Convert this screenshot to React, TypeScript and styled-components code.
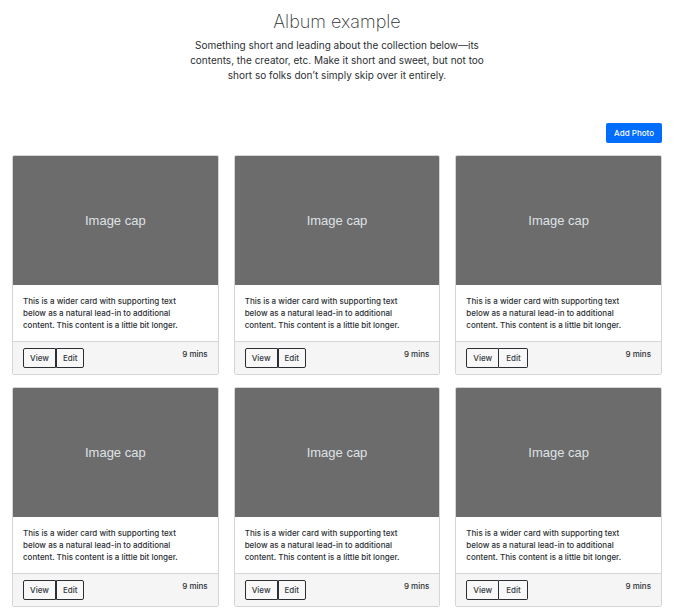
import React from "react";
import styled, { createGlobalStyle } from "styled-components";

const GlobalStyle = createGlobalStyle`
  *, *::before, *::after { box-sizing: border-box; }
  body {
    margin: 0;
    background: #fff;
    color: #2b2f33;
    font-family: Inter, "Liberation Sans", sans-serif;
    font-size: 8px;
    line-height: 12px;
  }
`;

const Page = styled.main`
  padding: 8px 12px;
`;

const Intro = styled.header`
  max-width: 312px;
  margin: 0 auto;
  text-align: center;
`;

const Title = styled.h1`
  margin: 0 0 2px;
  font-size: 18px;
  font-weight: 200;
  line-height: 28px;
`;

const Lead = styled.p`
  margin: 0;
  font-size: 10px;
  line-height: 15px;
`;

const Toolbar = styled.div`
  display: flex;
  justify-content: flex-end;
  margin: 40px 0 12px;
`;

const AddButton = styled.button`
  height: 20px;
  padding: 0 8px;
  border: 0;
  border-radius: 2px;
  background: #006dfd;
  color: #fff;
  font: inherit;
  font-weight: 500;
  cursor: pointer;
`;

const Grid = styled.section`
  display: grid;
  grid-template-columns: repeat(3, minmax(0, 1fr));
  gap: 12px 15px;
`;

const Card = styled.article`
  border: 1px solid #d5d5d5;
  border-radius: 2px;
  background: #fff;
  overflow: hidden;
`;

const ImageCap = styled.div`
  display: flex;
  align-items: center;
  justify-content: center;
  height: 129px;
  background: #6c6c6c;
  color: #dee2e6;
  font-family: "Liberation Sans", Arial, sans-serif;
  font-size: 13px;
  line-height: 16px;
`;

const CardText = styled.p`
  margin: 0;
  padding: 10px 24px 10px 10px;
  font-weight: 500;
`;

const CardFooter = styled.footer`
  display: flex;
  justify-content: space-between;
  align-items: flex-start;
  padding: 6px 10px;
  border-top: 1px solid #d5d5d5;
  background: #f5f5f5;
  font-weight: 500;
`;

const ActionButton = styled.button`
  height: 20px;
  padding: 0 6px;
  border: 1px solid #2b2f33;
  border-radius: 2px;
  background: #f8f8f8;
  color: #343a40;
  font: inherit;
  cursor: pointer;
`;

const ButtonGroup = styled.div<{ $sharedBorder: boolean }>`
  display: flex;

  ${ActionButton}:first-child {
    border-top-right-radius: 0;
    border-bottom-right-radius: 0;
  }

  ${ActionButton}:last-child {
    border-top-left-radius: 0;
    border-bottom-left-radius: 0;
    ${({ $sharedBorder }) => $sharedBorder && "border-left: 0; padding-left: 7px;"}
  }
`;

const photos = [1, 2, 3, 4, 5, 6];

export default function App() {
  return (
    <>
      <GlobalStyle />
      <Page>
        <Intro>
          <Title>Album example</Title>
          <Lead>
            Something short and leading about the collection below—its contents, the creator, etc.
            Make it short and sweet, but not too short so folks don’t simply skip over it entirely.
          </Lead>
        </Intro>
        <Toolbar>
          <AddButton type="button">Add Photo</AddButton>
        </Toolbar>
        <Grid>
          {photos.map((id) => (
            <Card key={id}>
              <ImageCap>Image cap</ImageCap>
              <CardText>
                This is a wider card with supporting text below as a natural lead-in to additional
                content. This content is a little bit longer.
              </CardText>
              <CardFooter>
                <ButtonGroup $sharedBorder={id % 3 === 0} role="group" aria-label="Photo actions">
                  <ActionButton type="button">View</ActionButton>
                  <ActionButton type="button">Edit</ActionButton>
                </ButtonGroup>
                <span>9 mins</span>
              </CardFooter>
            </Card>
          ))}
        </Grid>
      </Page>
    </>
  );
}
